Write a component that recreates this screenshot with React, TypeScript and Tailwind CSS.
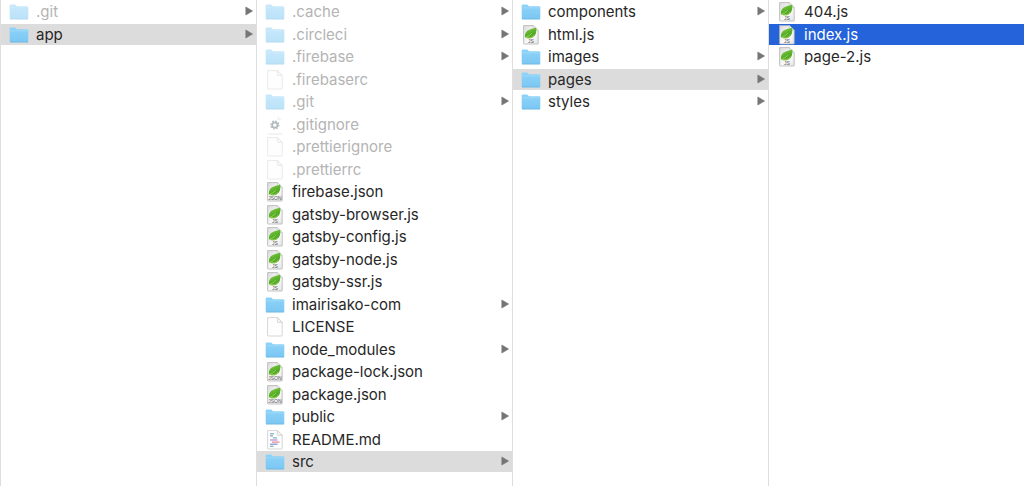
import { useState } from "react";
import clsx from "clsx";

type Kind = "folder" | "file" | "config" | "js" | "json" | "markdown";

interface Entry {
  name: string;
  kind: Kind;
  hidden?: boolean;
}

interface ColumnData {
  label: string;
  initial: string;
  entries: Entry[];
}

const columns: ColumnData[] = [
  {
    label: "Projects",
    initial: "app",
    entries: [
      { name: ".git", kind: "folder", hidden: true },
      { name: "app", kind: "folder" },
    ],
  },
  {
    label: "app",
    initial: "src",
    entries: [
      { name: ".cache", kind: "folder", hidden: true },
      { name: ".circleci", kind: "folder", hidden: true },
      { name: ".firebase", kind: "folder", hidden: true },
      { name: ".firebaserc", kind: "file", hidden: true },
      { name: ".git", kind: "folder", hidden: true },
      { name: ".gitignore", kind: "config", hidden: true },
      { name: ".prettierignore", kind: "file", hidden: true },
      { name: ".prettierrc", kind: "file", hidden: true },
      { name: "firebase.json", kind: "json" },
      { name: "gatsby-browser.js", kind: "js" },
      { name: "gatsby-config.js", kind: "js" },
      { name: "gatsby-node.js", kind: "js" },
      { name: "gatsby-ssr.js", kind: "js" },
      { name: "imairisako-com", kind: "folder" },
      { name: "LICENSE", kind: "file" },
      { name: "node_modules", kind: "folder" },
      { name: "package-lock.json", kind: "json" },
      { name: "package.json", kind: "json" },
      { name: "public", kind: "folder" },
      { name: "README.md", kind: "markdown" },
      { name: "src", kind: "folder" },
    ],
  },
  {
    label: "src",
    initial: "pages",
    entries: [
      { name: "components", kind: "folder" },
      { name: "html.js", kind: "js" },
      { name: "images", kind: "folder" },
      { name: "pages", kind: "folder" },
      { name: "styles", kind: "folder" },
    ],
  },
  {
    label: "pages",
    initial: "index.js",
    entries: [
      { name: "404.js", kind: "js" },
      { name: "index.js", kind: "js" },
      { name: "page-2.js", kind: "js" },
    ],
  },
];

function Gradients() {
  return (
    <svg className="absolute size-0" aria-hidden="true">
      <defs>
        <linearGradient id="folder" x1="0" y1="0" x2="0" y2="1">
          <stop offset="0" stopColor="#8fd3f8" />
          <stop offset="1" stopColor="#7ac7f3" />
        </linearGradient>
        <linearGradient id="paper" x1="0" y1="0" x2="1" y2="1">
          <stop offset="0" stopColor="#dcdcdc" />
          <stop offset="0.6" stopColor="#fafafa" />
          <stop offset="1" stopColor="#e4e4e4" />
        </linearGradient>
        <linearGradient id="leaf" x1="0" y1="0" x2="0.5" y2="1">
          <stop offset="0" stopColor="#92cf58" />
          <stop offset="0.55" stopColor="#5db42b" />
          <stop offset="1" stopColor="#4da31d" />
        </linearGradient>
      </defs>
    </svg>
  );
}

function FolderIcon() {
  return (
    <svg width="20" height="16" viewBox="0 0 20 16" aria-hidden="true">
      <path d="M.7 14.3V1.5Q.7.4 1.8.4h4q.7 0 1.1.6l.7.9q.3.4.9.4h9.7q1.1 0 1.1 1.1v10.9q0 1-1 1H1.7q-1 0-1-1z" fill="url(#folder)" />
      <path d="M.7 3.9h18.6" stroke="#a5dbf9" strokeWidth=".8" />
      <path d="M1 15h18" stroke="#68b2dc" strokeWidth=".7" />
    </svg>
  );
}

function FileIcon({ kind }: { kind: Kind }) {
  const script = kind === "js" || kind === "json";
  return (
    <svg width="16" height="20" viewBox="0 0 16 20" aria-hidden="true">
      {kind === "config" ? (
        <>
          <path d="M10.5.8v4.2h4.3z" fill="#e8e8e8" />
          <path d="M.6 19h14.6" stroke="#c8c8c8" strokeWidth=".8" />
          <circle cx="7.8" cy="10" r="2.7" fill="none" stroke="#62767e" strokeWidth="1.7" />
          <circle cx="7.8" cy="10" r="4" fill="none" stroke="#62767e" strokeWidth="1.3" strokeDasharray="1.57 1.57" />
        </>
      ) : (
        <>
          <path
            d="M.6.6h9.8l4.8 4.8v13q0 .6-.6.6H1.2q-.6 0-.6-.6z"
            fill={script ? "url(#paper)" : "#fefefe"}
            stroke={script ? "#b4b4b4" : "#cbcbcb"}
            strokeWidth=".8"
          />
          <path d="M10.4.6v4.2q0 .6.6.6h4.2z" fill="#f6f6f6" stroke="#c8c8c8" strokeWidth=".7" />
        </>
      )}
      {script && (
        <>
          <path d="M2 12.2C1.6 8 3.5 5.4 7 4.4c2.5-.7 4.3-.8 6.2-1.8.5 4.4-.2 8-3.7 9.8-2.4 1.2-5.2 1.2-7.5-.2z" fill="url(#leaf)" />
          <path d="M1.8 12.7c2-.7 5-2 7-4.4" fill="none" stroke="#b9e48a" strokeWidth=".6" />
          <path d="M2.2 12.4c3.2 1.2 7 .5 9-2.2" fill="none" stroke="#b4e06a" strokeWidth=".7" />
          <text x="7.9" y="18.2" textAnchor="middle" className="fill-[#555] font-['Liberation_Sans',sans-serif] text-[5px]">
            {kind === "js" ? "JS" : "JSON"}
          </text>
        </>
      )}
      {kind === "markdown" && (
        <g strokeWidth="1" fill="none">
          <path d="M3 3.8h4M6 7.9h4" stroke="#54a9b4" />
          <path d="M3 5.9h3" stroke="#6e88a0" />
          <path d="M3 10h7.5" stroke="#a774c7" />
          <path d="M5 12.1h7.5" stroke="#dd6c7c" />
          <path d="M3 14.2h7.5" stroke="#6a76c6" />
          <path d="M3 16.3h3.5" stroke="#54a9b4" />
        </g>
      )}
    </svg>
  );
}

function Column({ data, active }: { data: ColumnData; active: boolean }) {
  const [selected, setSelected] = useState(data.initial);
  return (
    <nav aria-label={data.label} className="min-w-0 border-l border-[#dedede] pt-px">
      <ul>
        {data.entries.map((entry) => {
          const isSelected = entry.name === selected;
          return (
            <li key={entry.name} className="odd:mb-0.5 even:mb-px">
              <button
                type="button"
                aria-current={isSelected}
                onClick={() => setSelected(entry.name)}
                className={clsx(
                  "flex h-[21px] w-full items-center pr-[3px] pl-2 text-left",
                  isSelected && (active ? "bg-[#2463d9] text-white" : "bg-[#dcdcdc]"),
                )}
              >
                <span className={clsx("flex w-5 shrink-0 justify-center", entry.hidden && "opacity-50")}>
                  {entry.kind === "folder" ? <FolderIcon /> : <FileIcon kind={entry.kind} />}
                </span>
                <span className={clsx("ml-[7px] min-w-0 flex-1 truncate", entry.hidden && "text-[#b4b4b4]")}>
                  {entry.name}
                </span>
                {entry.kind === "folder" && (
                  <svg width="8" height="10" viewBox="0 0 8 10" aria-hidden="true" className="mb-px shrink-0">
                    <path d="M.8 1 7.6 5 .8 9z" fill="#757575" stroke="#757575" strokeWidth=".6" strokeLinejoin="round" />
                  </svg>
                )}
              </button>
            </li>
          );
        })}
      </ul>
    </nav>
  );
}

export default function App() {
  return (
    <main className="grid min-h-screen grid-cols-4 bg-white font-['Inter',sans-serif] text-[15px] leading-[21px] text-[#272727]">
      <Gradients />
      {columns.map((column, index) => (
        <Column key={column.label} data={column} active={index === columns.length - 1} />
      ))}
    </main>
  );
}
